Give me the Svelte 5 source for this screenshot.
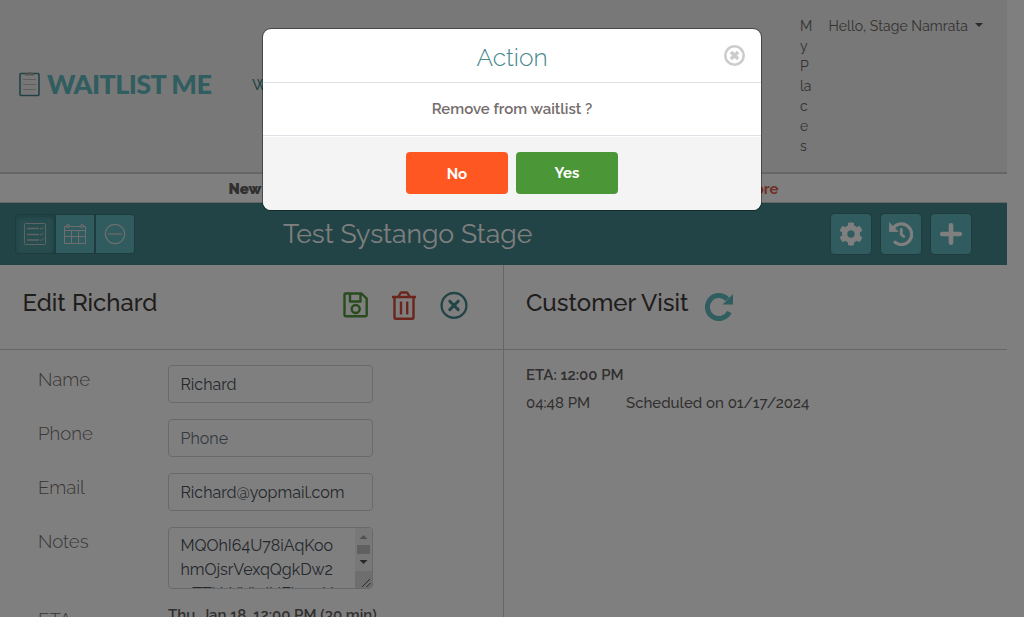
<script>
  const fields = [
    { label: 'Name', value: 'Richard' },
    { label: 'Phone', value: 'Phone', placeholder: true },
    { label: 'Email', value: 'Richard@yopmail.com' }
  ];
  const places = ['M', 'y', 'P', 'la', 'c', 'e', 's'];
</script>

<div class="page">
  <header>
    <div class="logo">
      <svg width="22" height="26" viewBox="0 0 22 26">
        <rect x="1" y="2.500" width="19" height="22" rx="1" fill="#eee" stroke="#44848a" stroke-width="1.600" />
        <path d="M4 8.500h13M4 13.500h13M4 18.500h13" stroke="#bdbdbd" stroke-width="1" />
        <path d="M6 4.500V2.500h2.500C9 .5 12.500 .5 13 2.500H15v2z" fill="#aaa" />
      </svg>
      <span>WAITLIST ME</span>
    </div>
    <nav>Waitlist</nav>
    <div class="places">{#each places as p}<span>{p}</span>{/each}</div>
    <div class="user"><span>Hello, Stage Namrata</span><i></i></div>
  </header>

  <div class="news"><b>New</b><b class="more">more</b></div>

  <div class="bar">
    <div class="group">
      <div class="tab active">
        <svg width="22" height="22" viewBox="0 0 22 22" fill="none" stroke="#bcc8c8" stroke-width="1">
          <rect x=".5" y=".5" width="21" height="21" rx="1" />
          <path d="M3 5.500h12M3 11.500h12M3 17h12" stroke-width="1.300" />
          <path d="M16 5l1.200 1.200L19.500 4M16 11l1.200 1.200L19.500 10M16 16.500l1.200 1.200 2.300-2.200" />
        </svg>
      </div>
      <div class="tab">
        <svg width="22" height="22" viewBox="0 0 22 22" fill="none" stroke="#ddd" stroke-width="1">
          <path d="M.5 3.500h21v17H.5zM.5 7.500h21M.5 13.500h21M7.500 7.500v13M14.500 7.500v13" />
          <circle cx="4" cy="3" r="1.500" fill="#aaa" /><circle cx="18" cy="3" r="1.500" fill="#aaa" />
        </svg>
      </div>
      <div class="tab">
        <svg width="22" height="22" viewBox="0 0 22 22" fill="none" stroke="#ddd">
          <circle cx="11" cy="11" r="9.700" stroke-width="1.200" />
          <path d="M4 11h14" stroke="#b4c6c6" stroke-width="2" />
        </svg>
      </div>
    </div>
    <h1>Test Systango Stage</h1>
    <div class="tools">
      <div class="tool">
        <svg width="24" height="24" viewBox="0 0 512 512" fill="#fff"><path d="M487.400 315.700l-42.600-24.600c4.300-23.200 4.300-47 0-70.200l42.600-24.600c4.900-2.800 7.100-8.600 5.500-14-11.100-35.600-30-67.800-54.700-94.600-3.800-4.100-10-5.100-14.800-2.300L380.800 110c-17.900-15.400-38.500-27.300-60.800-35.100V25.800c0-5.600-3.900-10.500-9.400-11.700-36.700-8.200-74.300-7.800-109.200 0-5.500 1.200-9.400 6.100-9.400 11.700V75c-22.200 7.900-42.800 19.800-60.800 35.100L88.700 85.500c-4.900-2.800-11-1.900-14.800 2.300-24.700 26.700-43.600 58.900-54.700 94.600-1.700 5.400.6 11.200 5.500 14L67.300 221c-4.300 23.200-4.300 47 0 70.200l-42.600 24.600c-4.900 2.800-7.100 8.600-5.500 14 11.100 35.600 30 67.800 54.700 94.600 3.800 4.100 10 5.100 14.800 2.300l42.600-24.600c17.900 15.400 38.500 27.300 60.800 35.100v49.200c0 5.600 3.900 10.500 9.400 11.700 36.700 8.200 74.300 7.800 109.200 0 5.500-1.200 9.400-6.100 9.400-11.700v-49.200c22.200-7.900 42.800-19.800 60.800-35.100l42.600 24.600c4.900 2.800 11 1.900 14.800-2.300 24.700-26.700 43.600-58.900 54.700-94.600 1.500-5.500-.7-11.300-5.600-14.100zM256 336c-44.100 0-80-35.900-80-80s35.900-80 80-80 80 35.900 80 80-35.900 80-80 80z" /></svg>
      </div>
      <div class="tool">
        <svg width="24" height="24" viewBox="0 0 24 24" fill="none" stroke="#fff" stroke-width="3.200" stroke-linecap="round" stroke-linejoin="round">
          <path d="M4 6.200A10.300 10.300 0 1 1 6 20.300" />
          <path d="M.3 1v8.400h8.400z" fill="#fff" stroke-width=".8" />
          <path d="M12.300 7.500v5l2.500 2" stroke-width="2.800" />
        </svg>
      </div>
      <div class="tool">
        <svg width="24" height="24" viewBox="0 0 24 24" stroke="#fff" stroke-width="4.600" stroke-linecap="round"><path d="M12 3.200v17.600M3.200 12h17.600" /></svg>
      </div>
    </div>
  </div>

  <main>
    <section class="left">
      <div class="head">
        <h2 class="edit">Edit Richard</h2>
        <svg class="save" width="26" height="26" viewBox="0 0 26 26" fill="none" stroke="#50983a" stroke-width="2.400" stroke-linejoin="round">
          <path d="M1.500 2.500q0-1 1-1H18.500l5.200 5.200V23q0 1.200-1.200 1.200H2.700q-1.200 0-1.200-1.200zM7 2v7.500h10.500V2" /><circle cx="12.700" cy="17" r="4" />
        </svg>
        <svg class="trash" width="26" height="30" viewBox="0 0 26 30" fill="none" stroke="#d64a3a" stroke-width="2.400" stroke-linejoin="round">
          <path d="M1 7h24M3.500 7V27.500q0 1.300 1.500 1.300h16q1.500 0 1.500-1.300V7M7.500 6.500L9.500 3q.3-.5 1-.5h5q.7 0 1 .5l2 3.500M10 11.500v13M16.200 11.500v13" />
        </svg>
        <svg class="cancel" width="28" height="28" viewBox="0 0 28 28" fill="none" stroke="#46888c" stroke-width="2.300">
          <circle cx="14" cy="14.400" r="12.400" /><path d="M9.800 10.200l8.400 8.400M18.200 10.200l-8.400 8.400" stroke-width="3" stroke-linecap="round" />
        </svg>
      </div>
      <div class="form">
        {#each fields as f}
          <div class="row">
            <span class="label">{f.label}</span>
            <div class="input" class:placeholder={f.placeholder}>{f.value}</div>
          </div>
        {/each}
        <div class="row notes">
          <span class="label">Notes</span>
          <div class="area">
            <div class="text">MQOhI64U78iAqKoo<br />hmOjsrVexqQgkDw2<br />wTTbVdVkdUFbgwY</div>
            <svg width="17" height="60" viewBox="0 0 17 60">
              <path d="M0 0h17v43H0z" fill="#f1f1f1" />
              <path d="M0 43h17v17H0z" fill="#dcdcdc" />
              <path d="M4.500 11h8l-4-4z" fill="#a3a3a3" />
              <path d="M2 17h13v9H2z" fill="#c1c1c1" />
              <path d="M4.500 32h8l-4 4z" fill="#505050" />
              <path d="M7 59l8-8M11.500 59l4-4" stroke="#555" />
            </svg>
          </div>
        </div>
        <div class="row">
          <span class="label">ETA</span>
          <b class="when">Thu, Jan 18, 12:00 PM (30 min)</b>
        </div>
      </div>
    </section>
    <section class="right">
      <div class="head">
        <h2 class="visit">Customer Visit</h2>
        <svg class="refresh" width="28" height="28" viewBox="0 0 28 28">
          <path d="M24.300 19A11.500 11.500 0 1 1 22.400 6.300" fill="none" stroke="#60babe" stroke-width="5" />
          <path d="M28 1v10.500H17.500z" fill="#60babe" />
        </svg>
      </div>
      <div class="log">
        <b>ETA: 12:00 PM</b>
        <div class="entry"><span class="time">04:48 PM</span><span class="event">Scheduled on 01/17/2024</span></div>
      </div>
    </section>
  </main>
</div>

<div class="overlay">
  <div class="modal">
    <div class="title">
      <span>Action</span>
      <svg width="22" height="22" viewBox="0 0 22 22" fill="none" stroke="#ccc" stroke-width="2.600">
        <circle cx="10.500" cy="10.500" r="9.200" /><path d="M6.900 6.900l7.200 7.200M14.100 6.900l-7.200 7.200" stroke-width="3.500" />
      </svg>
    </div>
    <div class="body"><span>Remove from waitlist ?</span></div>
    <div class="foot">
      <button class="no">No</button>
      <button class="yes">Yes</button>
    </div>
  </div>
</div>

<style>
  :global(body) { margin: 0; background: #fff; overflow: hidden; }
  .page, .overlay { font-family: Raleway, Lato, sans-serif; box-sizing: border-box; }
  .page { width: 1007px; height: 617px; overflow: hidden; display: flex; flex-direction: column; }
  svg { display: block; flex: none; }
  h1, h2 { margin: 0; white-space: nowrap; }
  header { height: 172px; flex: none; background: #f0f0f0; border-bottom: 2px solid #ccc; display: flex; align-items: flex-start; color: #6b6464; font-size: 14px; line-height: 20px; }
  header > div, nav { flex: none; }
  .logo { display: flex; align-items: center; padding: 70px 0 0 19px; width: 252px; box-sizing: border-box; gap: 6px; }
  .logo span { color: #60babe; font-family: Lato, sans-serif; font-weight: 900; font-size: 27px; line-height: 28px; letter-spacing: -0.600px; white-space: nowrap; }
  nav { padding-top: 75px; width: 548px; color: #46888c; font-size: 15px; font-weight: 500; }
  .places { width: 28.500px; padding-top: 16px; display: flex; flex-direction: column; }
  .user { padding-top: 16px; display: flex; align-items: center; letter-spacing: 0.07px; white-space: nowrap; }
  .user i { border: 4px solid transparent; border-top-color: #555; border-bottom: 0; margin: -2px 0 0 7px; }
  .news { height: 28px; flex: none; border-bottom: 1px solid #ccc; display: flex; justify-content: space-between; padding: 0 228.500px; font-size: 15px; line-height: 30px; color: #655f5f; }
  .news b { font-weight: 900; }
  .news .more { color: #e0604a; font-weight: 700; }
  .bar { height: 62px; flex: none; background: #46888c; display: flex; align-items: center; box-sizing: border-box; padding: 0 36px 0 15px; }
  .group { display: flex; border-radius: 4px; overflow: hidden; border: 1px solid #3d797d; box-sizing: border-box; }
  .tab { width: 38px; height: 38px; display: flex; align-items: center; justify-content: center; background: #60b8be; border-left: 2px solid #3d797d; }
  .tab.active { background: #509a9f; border-left: 0; box-shadow: inset 0 2px 5px #3d797d; }
  h1 { font-size: 26.600px; line-height: 34px; color: #fff; padding-left: 148px; font-weight: 400; }
  .tools { margin-left: auto; display: flex; gap: 10px; }
  .tool { width: 40px; height: 40px; box-sizing: border-box; border-radius: 4px; background: #60b8be; box-shadow: 0 0 0 1px #3d797d; display: flex; align-items: center; justify-content: center; }
  main { flex: 1; display: flex; min-height: 0; }
  .left { width: 503px; border-right: 1px solid #ccc; }
  .right { flex: 1; }
  .head { height: 84px; border-bottom: 1px solid #ccc; display: flex; align-items: flex-start; }
  h2 { font-size: 24px; line-height: 30px; color: #413a3a; padding-top: 23px; font-weight: 500; }
  .edit { width: 320px; padding-left: 22.500px; }
  .save { margin-top: 27px; }
  .trash { margin: 25px 0 0 22px; }
  .cancel { margin: 26px 0 0 23px; }
  .visit { width: 179px; padding-left: 22px; }
  .refresh { margin: 28px 0 0 0; }
  .form { padding: 15px 0 0 38px; display: flex; flex-direction: column; gap: 16px; }
  .row { height: 38px; flex: none; display: flex; }
  .label { width: 130px; font-size: 18.600px; line-height: 30px; font-weight: 300; color: #746c6c; }
  .input, .area { width: 205px; box-sizing: border-box; border: 1px solid #ced4da; border-radius: 4px; font-size: 16px; line-height: 37px; color: #495057; }
  .input { padding-left: 11.500px; }
  .placeholder { color: #6c757d; }
  .notes { height: 62px; }
  .area { display: flex; height: 62px; overflow: hidden; }
  .text { line-height: 24px; padding: 6px 0 0 11.500px; width: 174.500px; white-space: nowrap; }
  .when { font-size: 15px; line-height: 20px; color: #655f5f; font-weight: 600; white-space: nowrap; }
  .log { padding: 14px 0 0 22px; color: #655f5f; font-size: 15px; line-height: 22px; font-weight: 500; }
  .log b { display: block; font-weight: 600; }
  .entry { display: flex; margin-top: 6px; }
  .time { width: 100px; }
  .overlay { position: absolute; left: 0; top: 0; width: 1024px; height: 617px; background: rgba(0, 0, 0, 0.5); }
  .modal { width: 500px; height: 183px; margin: 28px 0 0 262px; box-sizing: border-box; border: 1px solid rgba(0, 0, 0, 0.4); border-radius: 9px; background: #fff; background-clip: padding-box; overflow: hidden; display: flex; flex-direction: column; }
  .title { height: 53px; display: flex; align-items: center; border-bottom: 1px solid #dee2e6; color: #46888c; font-size: 24.500px; font-weight: 300; padding: 0 15px 0 213.500px; justify-content: space-between; }
  .title span { line-height: 30px; padding-top: 5px; white-space: nowrap; }
  .body { height: 52px; border-bottom: 1px solid #dee2e6; text-align: center; color: #746c6c; font-size: 15px; line-height: 52px; font-weight: 600; }
  .foot { flex: 1; margin-top: 1px; background: #f4f4f4; display: flex; justify-content: center; padding-top: 15px; gap: 8px; }
  button { width: 102px; height: 42px; border: 0; border-radius: 4px; padding: 0; color: #fff; font: 700 15px Raleway, Lato, sans-serif; }
  .no { background: #ff5722; padding-top: 2px; }
  .yes { background: #4b9636; }
</style>
